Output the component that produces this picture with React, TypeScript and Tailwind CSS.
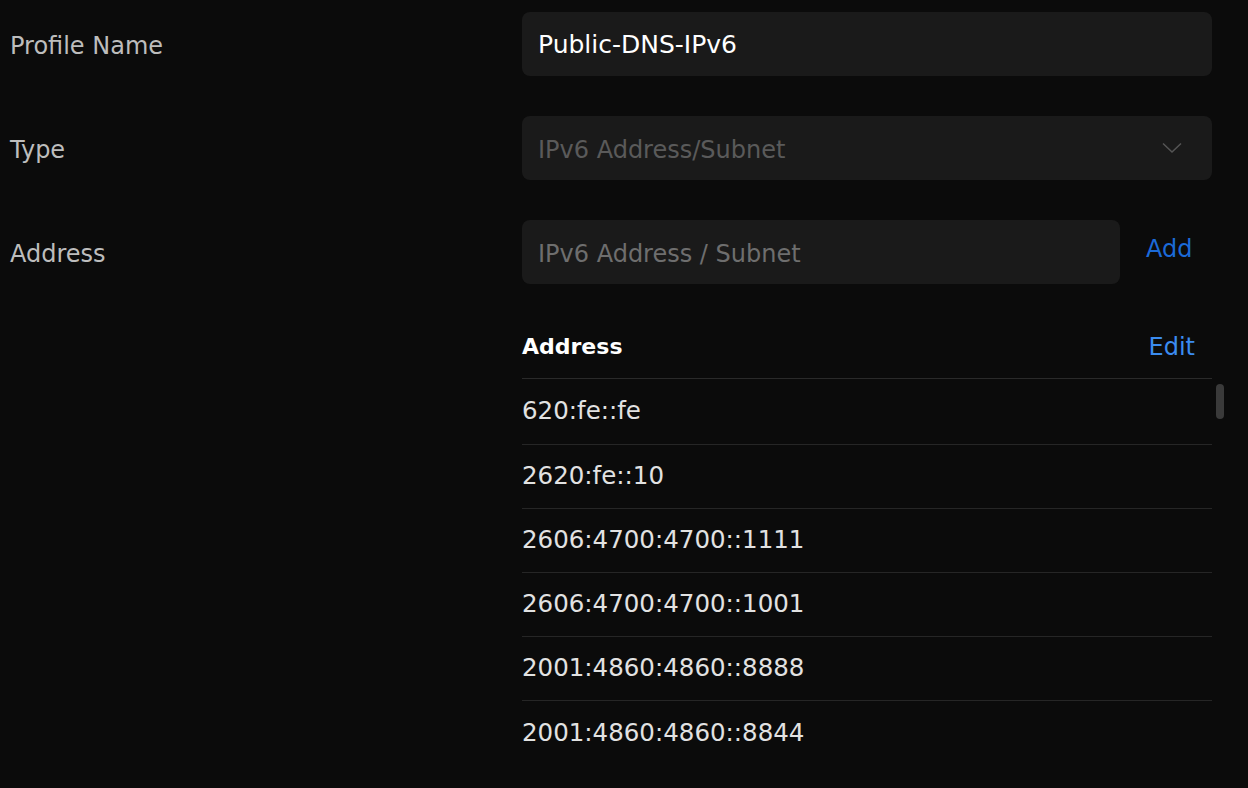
const addresses = [
  '620:fe::fe',
  '2620:fe::10',
  '2606:4700:4700::1111',
  '2606:4700:4700::1001',
  '2001:4860:4860::8888',
  '2001:4860:4860::8844',
];

function Label({ children }: { children: React.ReactNode }) {
  return <div className="w-[522px] shrink-0 pl-[10px] pt-[4px] text-[24px] text-[#bdbdbd]">{children}</div>;
}

export default function App() {
  return (
    <div
      className="min-h-screen w-full bg-[#0b0b0b] overflow-hidden"
      style={{ fontFamily: '"DejaVu Sans", sans-serif' }}
    >
      <div className="flex flex-col pt-[12px]">
        <div className="flex items-center">
          <Label>Profile Name</Label>
          <div className="w-[690px] h-[64px] rounded-lg bg-[#1a1a1a] flex items-center px-4 pt-[2px] text-[25px] text-white">
            Public-DNS-IPv6
          </div>
        </div>

        <div className="flex items-center mt-[40px]">
          <Label>Type</Label>
          <div className="w-[690px] h-[64px] rounded-lg bg-[#1a1a1a] flex items-center justify-between pl-4 pr-[30px] text-[24px] text-[#5a5a5a]">
            <span className="pt-[4px]">IPv6 Address/Subnet</span>
            <svg width="20" height="12" viewBox="0 0 20 12" fill="none">
              <path d="M1 1.5 L10 10 L19 1.5" stroke="#555" strokeWidth="1.5" />
            </svg>
          </div>
        </div>

        <div className="flex items-center mt-[40px]">
          <Label>Address</Label>
          <div className="w-[598px] h-[64px] rounded-lg bg-[#1a1a1a] flex items-center px-4 pt-[3px] text-[24px] text-[#6e6e6e]">
            IPv6 Address / Subnet
          </div>
          <div className="ml-[26px] text-[24px] text-[#1b6ad8] -mt-[7px]">Add</div>
        </div>

        <div className="flex mt-[31px]">
          <div className="w-[522px] shrink-0" />
          <div className="w-[690px] relative">
            <div className="h-[64px] flex items-center justify-between border-b border-[#2a2a2a]">
              <span className="font-bold text-white text-[22px]">Address</span>
              <span className="text-[#3b8cf0] text-[24px] pr-[17px]">Edit</span>
            </div>
            <div>
              {addresses.map((a) => (
                <div
                  key={a}
                  className="h-[64px] first:h-[66px] flex items-center border-b border-[#262626] last:border-b-0 text-[24.5px] text-[#e2e2e2]"
                >
                  {a}
                </div>
              ))}
            </div>
            <div className="absolute left-[694px] top-[69px] w-[8px] h-[35px] rounded-full bg-[#3a3a3a]" />
          </div>
        </div>
      </div>
    </div>
  );
}
